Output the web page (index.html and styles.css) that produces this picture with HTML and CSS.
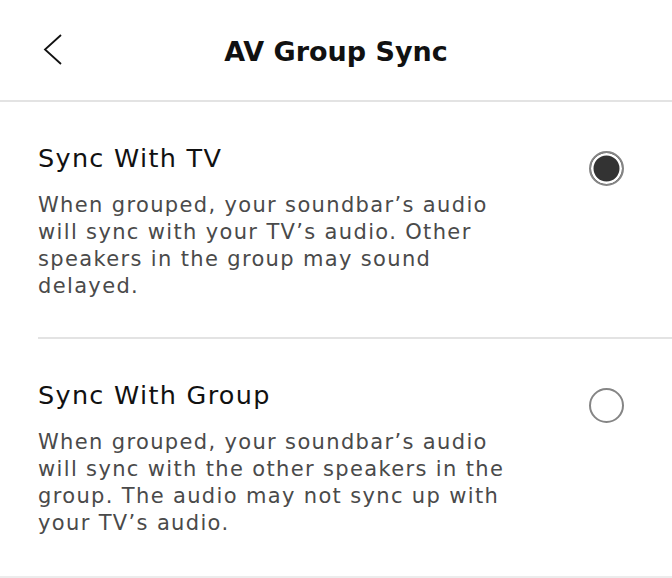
FILE: index.html
```html
<!DOCTYPE html>
<html>
<head>
<meta charset="utf-8">
<link rel="stylesheet" href="styles.css">
</head>
<body>
<header class="topbar">
  <button class="back" aria-label="Back">
    <svg width="19" height="31" viewBox="0 0 19 31"><path d="M18 1 L2 15.5 L18 30" fill="none" stroke="#111" stroke-width="1.8"/></svg>
  </button>
  <h1 class="title">AV Group Sync</h1>
</header>
<main class="list">
  <section class="option">
    <div class="text">
      <h2 class="opt-title">Sync With TV</h2>
      <p class="opt-desc">When grouped, your soundbar’s audio will sync with your TV’s audio. Other speakers in the group may sound delayed.</p>
    </div>
    <span class="radio checked"></span>
  </section>
  <section class="option">
    <div class="text">
      <h2 class="opt-title">Sync With Group</h2>
      <p class="opt-desc">When grouped, your soundbar’s audio will sync with the other speakers in the group. The audio may not sync up with your TV’s audio.</p>
    </div>
    <span class="radio"></span>
  </section>
  <div class="end-rule"></div>
</main>
</body>
</html>
```
FILE: styles.css
```css
* { box-sizing: border-box; }
html, body { margin: 0; padding: 0; background: #fff; }
body { font-family: "DejaVu Sans", "Noto Sans", sans-serif; color: #111; width: 672px; height: 578px; overflow: hidden; }
.topbar {
  height: 102px;
  padding-top: 2px;
  display: flex;
  align-items: center;
  justify-content: center;
  position: relative;
  border-bottom: 2px solid #e3e3e3;
}
.back {
  position: absolute;
  left: 43px;
  top: 34px;
  background: none;
  border: 0;
  padding: 0;
  display: block;
}
.back svg { display: block; }
.title { margin: 0; font-size: 27px; font-weight: 700; color: #111; }
.option {
  display: flex;
  align-items: flex-start;
  margin-left: 38px;
  border-bottom: 2px solid #e3e3e3;
  padding: 40px 48px 37px 0;
}
.option:last-of-type { border-bottom: 0; padding-bottom: 39px; }
.end-rule { height: 3px; background: #ececec; }
.text { flex: 1; }
.opt-title { margin: 0 0 18px; font-size: 25.5px; font-weight: 400; color: #111; line-height: 32px; letter-spacing: 1.3px; }
.opt-desc { margin: 0; font-size: 21px; line-height: 27px; color: #4a4a4a; width: 480px; letter-spacing: 1.35px; }
.radio {
  width: 35px; height: 35px;
  border-radius: 50%;
  border: 2px solid #858585;
  margin-top: 9px;
  flex: none;
}
.radio.checked {
  background: #333;
  box-shadow: inset 0 0 0 2.5px #fff;
}
```
